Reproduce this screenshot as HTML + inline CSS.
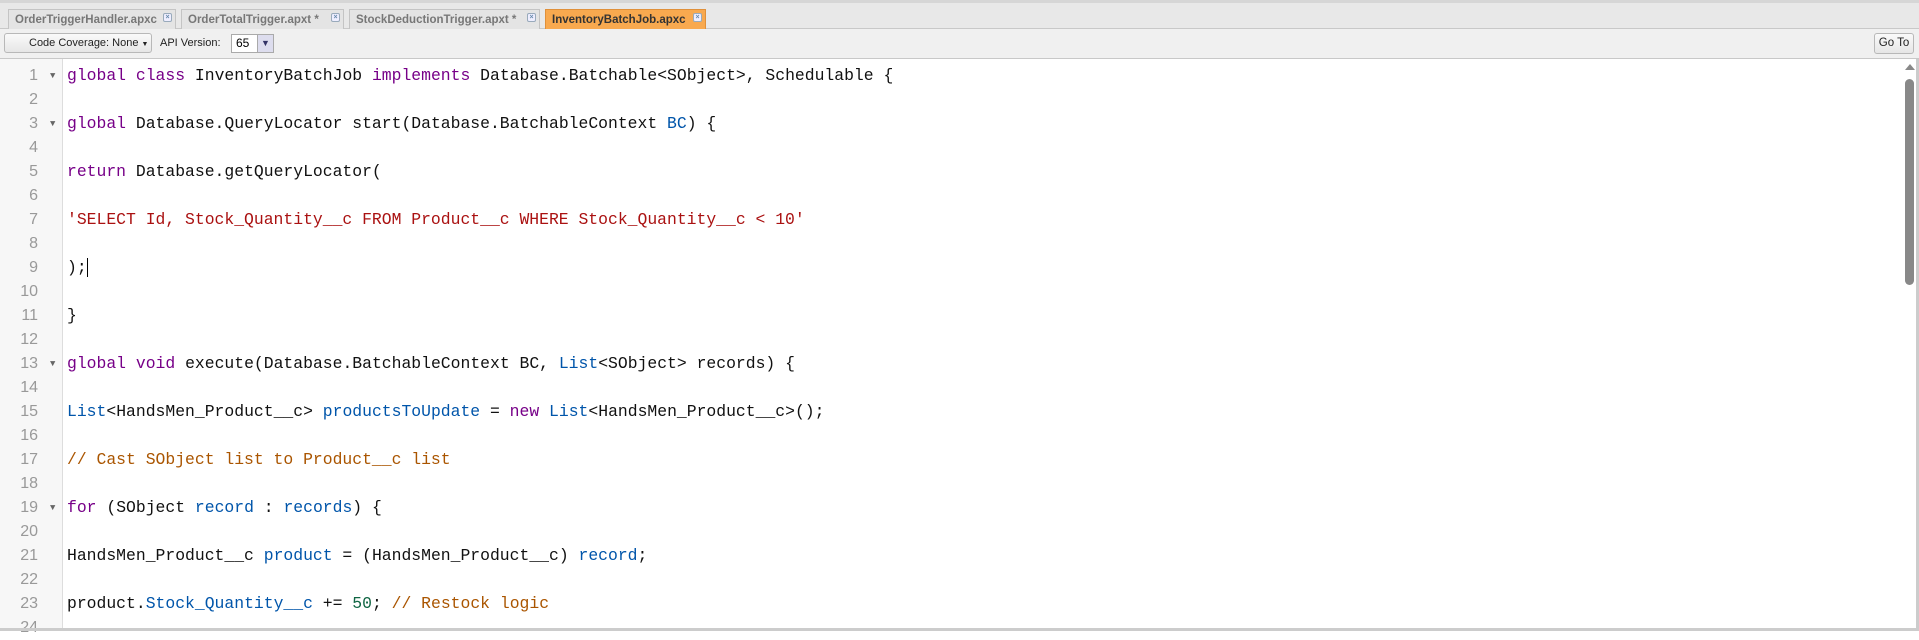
<!DOCTYPE html>
<html><head><style>
*{margin:0;padding:0;box-sizing:border-box}
body{width:1919px;height:631px;overflow:hidden;background:#fff;font-family:"Liberation Sans",sans-serif;position:relative}
.tabbar{position:absolute;left:0;top:0;width:1919px;height:29px;background:#e8e8e8;border-top:3px solid #d6d6d6;border-bottom:1px solid #c8c8c8}
.tab{position:absolute;top:6px;height:22px;background:#e4e4e4;border:1px solid #c4c4c4;border-bottom:none;font-size:11.5px;font-weight:bold;color:#777;line-height:21px;padding-left:6px;white-space:nowrap}
.tab .x{position:absolute;right:3px;top:3px;width:9px;height:9px;border:1px solid #9ab;border-radius:2px;font-size:7px;line-height:7px;text-align:center;color:#68a;background:#eef}
.tab.act{background:#f8a94f;color:#333;border-color:#e0903a}
.toolbar{position:absolute;left:0;top:29px;width:1919px;height:30px;background:#f0f0f0;border-bottom:1px solid #c8c8c8}
.btn{position:absolute;border:1px solid #b8b8b8;border-radius:3px;background:linear-gradient(#fafafa,#e6e6e6);font-size:11px;color:#222;white-space:nowrap}
.gutter{position:absolute;left:0;top:59px;width:63px;height:572px;background:#f7f7f7;border-right:1px solid #ddd}
.code{position:absolute;left:0;top:64px;width:1900px}
.ln{height:24px;line-height:24px;font-family:"Liberation Mono",monospace;font-size:16.4px;white-space:pre;position:relative}
.ln .n{position:absolute;left:0;width:38px;text-align:right;color:#999;font-family:"Liberation Sans",sans-serif;font-size:16px}
.ln .f{position:absolute;left:50px;color:#666;font-size:9px}
.ln .t{position:absolute;left:67px;color:#111}
.k{color:#708}.v{color:#05a}.s{color:#a11}.c{color:#a50}.m{color:#164}
.sb{position:absolute;left:1902px;top:59px;width:15px;height:572px;background:#fff}
.thumb{position:absolute;left:1905px;top:79px;width:9px;height:206px;background:#888;border-radius:5px}
</style></head><body>
<div class="tabbar">
<div class="tab" style="left:8px;width:168px">OrderTriggerHandler.apxc<span class="x">×</span></div>
<div class="tab" style="left:181px;width:163px">OrderTotalTrigger.apxt *<span class="x">×</span></div>
<div class="tab" style="left:349px;width:191px">StockDeductionTrigger.apxt *<span class="x">×</span></div>
<div class="tab act" style="left:545px;width:161px">InventoryBatchJob.apxc<span class="x">×</span></div>
</div>
<div class="toolbar">
<div class="btn" style="left:4px;top:4px;width:148px;height:20px;line-height:18px;padding-left:24px">Code Coverage: None <span style="font-size:7px">▼</span></div>
<div style="position:absolute;left:160px;top:4px;font-size:11px;line-height:20px;color:#222;white-space:nowrap">API Version:</div>
<div style="position:absolute;left:231px;top:5px;width:43px;height:19px;border:1px solid #aaa;background:#fff;font-size:12px;line-height:17px;padding-left:4px">65</div>
<div style="position:absolute;left:257px;top:5px;width:17px;height:19px;border:1px solid #aaa;background:#dde;font-size:9px;text-align:center;line-height:17px;color:#336">▼</div>
<div class="btn" style="left:1874px;top:4px;width:40px;height:21px;line-height:19px;text-align:center;font-size:11.5px">Go To</div>
</div>
<div class="gutter"></div>
<div class="code">
<div class="ln"><span class="n">1</span><span class="f">▼</span><span class="t"><span class="k">global</span> <span class="k">class</span> InventoryBatchJob <span class="k">implements</span> Database.Batchable&lt;SObject&gt;, Schedulable {</span></div>
<div class="ln"><span class="n">2</span></div>
<div class="ln"><span class="n">3</span><span class="f">▼</span><span class="t"><span class="k">global</span> Database.QueryLocator start(Database.BatchableContext <span class="v">BC</span>) {</span></div>
<div class="ln"><span class="n">4</span></div>
<div class="ln"><span class="n">5</span><span class="t"><span class="k">return</span> Database.getQueryLocator(</span></div>
<div class="ln"><span class="n">6</span></div>
<div class="ln"><span class="n">7</span><span class="t"><span class="s">'SELECT Id, Stock_Quantity__c FROM Product__c WHERE Stock_Quantity__c &lt; 10'</span></span></div>
<div class="ln"><span class="n">8</span></div>
<div class="ln"><span class="n">9</span><span class="t">);<span style="border-left:1px solid #000"></span></span></div>
<div class="ln"><span class="n">10</span></div>
<div class="ln"><span class="n">11</span><span class="t">}</span></div>
<div class="ln"><span class="n">12</span></div>
<div class="ln"><span class="n">13</span><span class="f">▼</span><span class="t"><span class="k">global</span> <span class="k">void</span> execute(Database.BatchableContext BC, <span class="v">List</span>&lt;SObject&gt; records) {</span></div>
<div class="ln"><span class="n">14</span></div>
<div class="ln"><span class="n">15</span><span class="t"><span class="v">List</span>&lt;HandsMen_Product__c&gt; <span class="v">productsToUpdate</span> = <span class="k">new</span> <span class="v">List</span>&lt;HandsMen_Product__c&gt;();</span></div>
<div class="ln"><span class="n">16</span></div>
<div class="ln"><span class="n">17</span><span class="t"><span class="c">// Cast SObject list to Product__c list</span></span></div>
<div class="ln"><span class="n">18</span></div>
<div class="ln"><span class="n">19</span><span class="f">▼</span><span class="t"><span class="k">for</span> (SObject <span class="v">record</span> : <span class="v">records</span>) {</span></div>
<div class="ln"><span class="n">20</span></div>
<div class="ln"><span class="n">21</span><span class="t">HandsMen_Product__c <span class="v">product</span> = (HandsMen_Product__c) <span class="v">record</span>;</span></div>
<div class="ln"><span class="n">22</span></div>
<div class="ln"><span class="n">23</span><span class="t">product.<span class="v">Stock_Quantity__c</span> += <span class="m">50</span>; <span class="c">// Restock logic</span></span></div>
<div class="ln"><span class="n">24</span></div>
</div>
<div class="sb"></div>
<div style="position:absolute;left:1905px;top:64px;width:0;height:0;border-left:5px solid transparent;border-right:5px solid transparent;border-bottom:6px solid #888"></div>
<div class="thumb"></div>
<div style="position:absolute;left:1916px;top:59px;width:3px;height:572px;background:#ccc"></div>
<div style="position:absolute;left:0;top:628px;width:1919px;height:3px;background:#ccc"></div>
</body></html>
